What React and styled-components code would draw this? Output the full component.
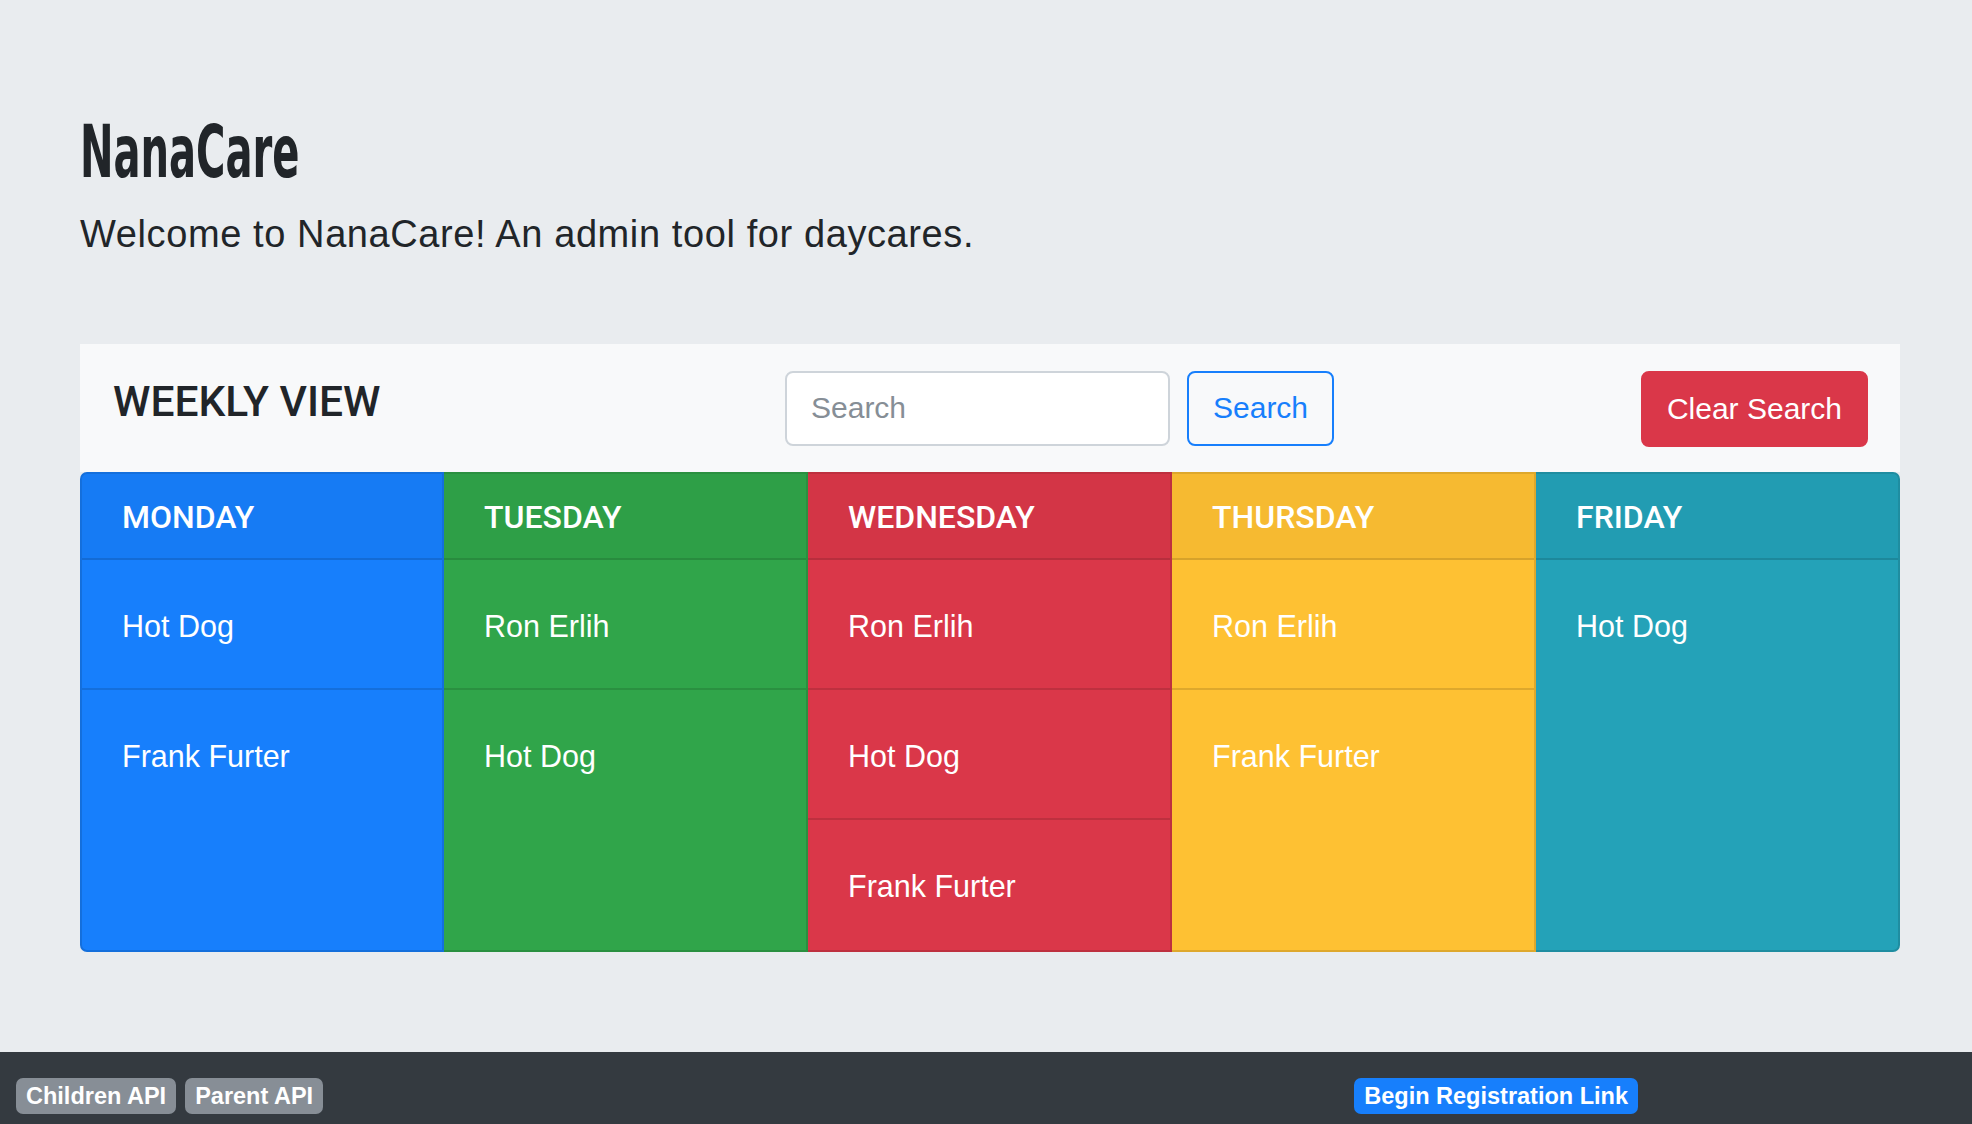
import { createGlobalStyle, styled } from "styled-components";

const GlobalStyle = createGlobalStyle`
  body {
    margin: 0;
    background-color: #e9ecef;
    color: #212529;
    font-family: "Liberation Sans", Arial, sans-serif;
  }
`;

const colors = {
  primary: "#177ffc",
  success: "#30a54a",
  danger: "#da3749",
  warning: "#fec133",
  info: "#24a2b8",
};

const Page = styled.div`
  min-height: 100vh;
  padding: 108px 72px 120px 80px;
  box-sizing: border-box;
`;

const Title = styled.h1`
  margin: 0;
  font-family: "DejaVu Sans Condensed", "DejaVu Sans", sans-serif;
  font-weight: 700;
  font-size: 73px;
  line-height: 1.2;
  transform: scaleX(0.61);
  transform-origin: left center;
`;

const Lead = styled.p`
  margin: 10px 0 0;
  font-size: 38px;
  line-height: 1.5;
  letter-spacing: 0.6px;
  font-weight: 300;
`;

const Board = styled.section`
  margin-top: 81px;
  width: 1820px;
`;

const Toolbar = styled.div`
  display: flex;
  align-items: flex-start;
  height: 128px;
  box-sizing: border-box;
  padding: 27px 32px 0 33px;
  background-color: #f8f9fa;
`;

const ToolbarTitle = styled.h3`
  flex: 0 0 672px;
  margin: 5px 0 0;
  font-family: Roboto, "Liberation Sans", sans-serif;
  font-weight: 500;
  font-size: 42.5px;
  line-height: 1.2;
  text-transform: uppercase;
`;

const SearchForm = styled.form`
  display: flex;
  gap: 17px;
`;

const SearchInput = styled.input`
  width: 385px;
  height: 75px;
  box-sizing: border-box;
  padding: 0 24px;
  border: 2px solid #ced4da;
  border-radius: 8px;
  background: #fff;
  font-family: "Liberation Sans", Arial, sans-serif;
  font-size: 30px;
  color: #495057;
  &::placeholder {
    color: #868e96;
  }
`;

const Button = styled.button`
  height: ${(p) => (p.$solid ? "76px" : "75px")};
  padding: 0 24px;
  box-sizing: border-box;
  border-radius: 8px;
  border: 2px solid ${(p) => p.$color};
  background: ${(p) => (p.$solid ? p.$color : "transparent")};
  color: ${(p) => (p.$solid ? "#fff" : p.$color)};
  font-family: "Liberation Sans", Arial, sans-serif;
  font-size: 30px;
  cursor: pointer;
  margin-left: ${(p) => (p.$push ? "auto" : "0")};
`;

const Week = styled.div`
  display: grid;
  grid-template-columns: repeat(5, 1fr);
`;

const DayCard = styled.div`
  display: flex;
  flex-direction: column;
  background-color: ${(p) => p.$color};
  color: #fff;
  border: 2px solid rgba(0, 0, 0, 0.125);
  border-left-width: ${(p) => (p.$first ? "2px" : "0")};
  border-radius: ${(p) =>
    p.$first ? "7px 0 0 7px" : p.$last ? "0 7px 7px 0" : "0"};
  overflow: hidden;
`;

const DayHeader = styled.div`
  display: flex;
  align-items: center;
  height: 86px;
  flex-shrink: 0;
  box-sizing: border-box;
  padding: 2px 40px 0;
  background-color: rgba(0, 0, 0, 0.03);
  border-bottom: 2px solid rgba(0, 0, 0, 0.125);
  font-family: Roboto, "Liberation Sans", sans-serif;
  font-weight: 500;
  font-size: 32px;
  line-height: 1.5;
  text-transform: uppercase;
`;

const Entry = styled.div`
  height: 130px;
  flex: 0 0 auto;
  box-sizing: border-box;
  padding: 44px 40px 0;
  font-size: 30.5px;
  line-height: 1.5;
  border-bottom: 2px solid rgba(0, 0, 0, 0.125);
  &:last-child {
    border-bottom: 0;
    flex-grow: 1;
  }
`;

const Footer = styled.footer`
  position: fixed;
  left: 0;
  right: 0;
  bottom: 0;
  height: 72px;
  box-sizing: border-box;
  display: flex;
  align-items: flex-start;
  gap: 9px;
  padding: 26px 0 0 16px;
  background-color: #343a40;
`;

const Badge = styled.a`
  display: inline-block;
  height: 36px;
  padding: 0 10px;
  border-radius: 7px;
  background-color: ${(p) => p.$color};
  color: #fff;
  font-weight: 700;
  font-size: 23.5px;
  line-height: 36px;
  text-decoration: none;
  margin-left: ${(p) => (p.$push ? "auto" : "0")};
  margin-right: ${(p) => (p.$push ? "334px" : "0")};
`;

const week = [
  { day: "Monday", color: colors.primary, kids: ["Hot Dog", "Frank Furter"] },
  { day: "Tuesday", color: colors.success, kids: ["Ron Erlih", "Hot Dog"] },
  {
    day: "Wednesday",
    color: colors.danger,
    kids: ["Ron Erlih", "Hot Dog", "Frank Furter"],
  },
  { day: "Thursday", color: colors.warning, kids: ["Ron Erlih", "Frank Furter"] },
  { day: "Friday", color: colors.info, kids: ["Hot Dog"] },
];

export default function App() {
  return (
    <>
      <GlobalStyle />
      <Page>
        <Title>NanaCare</Title>
        <Lead>Welcome to NanaCare! An admin tool for daycares.</Lead>
        <Board>
          <Toolbar>
            <ToolbarTitle>Weekly View</ToolbarTitle>
            <SearchForm onSubmit={(e) => e.preventDefault()}>
              <SearchInput placeholder="Search" />
              <Button type="submit" $color={colors.primary}>
                Search
              </Button>
            </SearchForm>
            <Button $solid $push $color={colors.danger}>
              Clear Search
            </Button>
          </Toolbar>
          <Week>
            {week.map((d, i) => (
              <DayCard
                key={d.day}
                $color={d.color}
                $first={i === 0}
                $last={i === week.length - 1}
              >
                <DayHeader>{d.day}</DayHeader>
                {d.kids.map((k) => (
                  <Entry key={k}>{k}</Entry>
                ))}
              </DayCard>
            ))}
          </Week>
        </Board>
      </Page>
      <Footer>
        <Badge href="#" $color="#878e96">Children API</Badge>
        <Badge href="#" $color="#878e96">Parent API</Badge>
        <Badge href="#" $push $color={colors.primary}>
          Begin Registration Link
        </Badge>
      </Footer>
    </>
  );
}
